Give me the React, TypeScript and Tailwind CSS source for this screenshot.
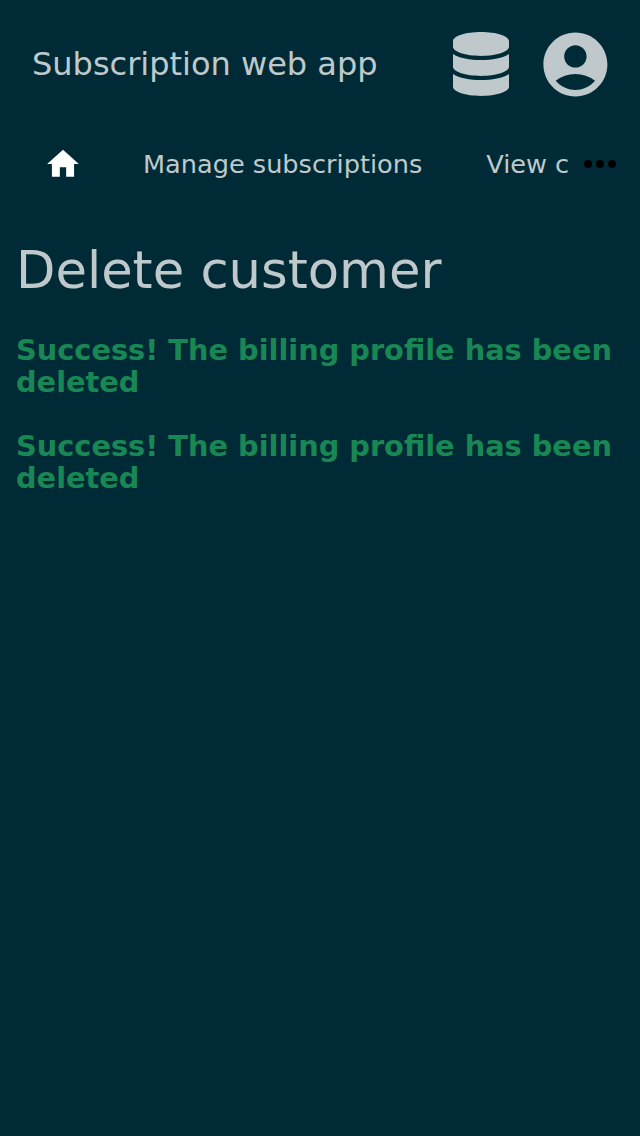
import { FaDatabase } from "react-icons/fa";
import { MdAccountCircle, MdHome } from "react-icons/md";

const messages = [
  "Success! The billing profile has been deleted",
  "Success! The billing profile has been deleted",
];

export default function App() {
  return (
    <div className="min-h-[1136px] w-[640px] overflow-hidden bg-[#002b36] font-['DejaVu_Sans',sans-serif] text-[#bfc9cc]">
      <header className="flex h-32 items-center justify-between px-8">
        <span className="text-[32px] leading-10">Subscription web app</span>
        <div className="flex items-center gap-6">
          <FaDatabase className="size-16" />
          <MdAccountCircle className="-mr-1.5 size-[76.8px]" />
        </div>
      </header>
      <nav className="flex h-[72px] items-center">
        <div className="flex min-w-0 flex-1 items-center overflow-hidden whitespace-nowrap text-[25.6px]">
          <MdHome className="ml-11 mr-[61px] size-[38px] shrink-0 text-white" />
          <span className="shrink-0">Manage subscriptions</span>
          <span className="ml-16 shrink-0">View customers</span>
        </div>
        <button className="ml-4 mr-6 flex shrink-0 gap-1 text-black" aria-label="More">
          <svg viewBox="0 0 32 8" className="h-2 w-8" fill="currentColor">
            <circle cx="4" cy="4" r="4" /><circle cx="16" cy="4" r="4" /><circle cx="28" cy="4" r="4" />
          </svg>
        </button>
      </nav>
      <main className="px-4 pt-10">
        <h1 className="text-[51.2px] leading-[60px]">Delete customer</h1>
        <div className="mt-[34px] flex flex-col gap-8 text-[28.8px] font-bold leading-8 text-[#198754]">
          {messages.map((m, i) => <p key={i}>{m}</p>)}
        </div>
      </main>
    </div>
  );
}
